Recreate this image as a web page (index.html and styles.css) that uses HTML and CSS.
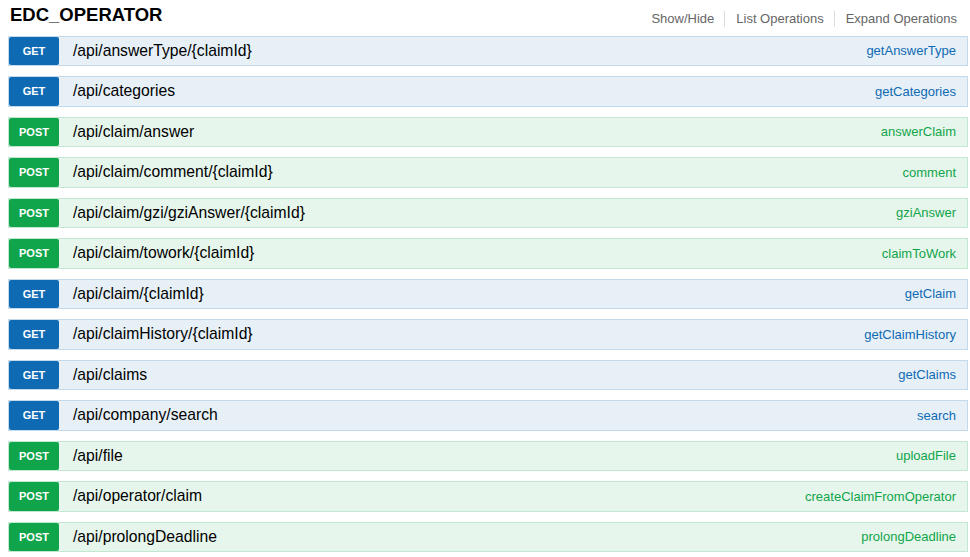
FILE: index.html
```html
<!DOCTYPE html>
<html>
<head>
<meta charset="utf-8">
<link rel="stylesheet" href="styles.css">
</head>
<body>
<div class="resource">
  <div class="res-head">
    <h2 class="res-title">EDC_OPERATOR</h2>
    <ul class="res-links">
      <li>Show/Hide</li>
      <li>List Operations</li>
      <li>Expand Operations</li>
    </ul>
  </div>
  <ul class="ops">
    <li class="op get"><span class="method">GET</span><span class="path">/api/answerType/{claimId}</span><span class="nick">getAnswerType</span></li>
    <li class="op get"><span class="method">GET</span><span class="path">/api/categories</span><span class="nick">getCategories</span></li>
    <li class="op post"><span class="method">POST</span><span class="path">/api/claim/answer</span><span class="nick">answerClaim</span></li>
    <li class="op post"><span class="method">POST</span><span class="path">/api/claim/comment/{claimId}</span><span class="nick">comment</span></li>
    <li class="op post"><span class="method">POST</span><span class="path">/api/claim/gzi/gziAnswer/{claimId}</span><span class="nick">gziAnswer</span></li>
    <li class="op post"><span class="method">POST</span><span class="path">/api/claim/towork/{claimId}</span><span class="nick">claimToWork</span></li>
    <li class="op get"><span class="method">GET</span><span class="path">/api/claim/{claimId}</span><span class="nick">getClaim</span></li>
    <li class="op get"><span class="method">GET</span><span class="path">/api/claimHistory/{claimId}</span><span class="nick">getClaimHistory</span></li>
    <li class="op get"><span class="method">GET</span><span class="path">/api/claims</span><span class="nick">getClaims</span></li>
    <li class="op get"><span class="method">GET</span><span class="path">/api/company/search</span><span class="nick">search</span></li>
    <li class="op post"><span class="method">POST</span><span class="path">/api/file</span><span class="nick">uploadFile</span></li>
    <li class="op post"><span class="method">POST</span><span class="path">/api/operator/claim</span><span class="nick">createClaimFromOperator</span></li>
    <li class="op post"><span class="method">POST</span><span class="path">/api/prolongDeadline</span><span class="nick">prolongDeadline</span></li>
  </ul>
</div>
</body>
</html>
```

FILE: styles.css
```css
html, body {
  margin: 0;
  padding: 0;
  background: #fff;
  font-family: "Liberation Sans", Arial, sans-serif;
}

.resource {
  width: 960px;
  padding-left: 8px;
}

.res-head {
  height: 35.5px;
  display: flex;
  justify-content: space-between;
  align-items: flex-start;
}

.res-title {
  margin: 0;
  padding: 4px 0 0 2px;
  font-size: 18.5px;
  font-weight: bold;
  color: #000;
  line-height: normal;
}

.res-links {
  list-style: none;
  margin: 0;
  padding: 11px 11px 0 0;
  display: flex;
}

.res-links li {
  font-size: 13px;
  color: #666;
  line-height: 16px;
  padding: 0 10px 0 11px;
  border-right: 1px solid #ddd;
}

.res-links li:last-child {
  border-right: none;
  padding-right: 0;
}

.ops {
  list-style: none;
  margin: 0;
  padding: 0;
}

.op {
  height: 28.5px;
  margin-bottom: 10px;
  display: flex;
  align-items: center;
  border: 1px solid;
}

.op.get {
  background: #e7f0f7;
  border-color: #c3d9ec;
}

.op.post {
  background: #e7f6ec;
  border-color: #c3e8d1;
}

.method {
  width: 50px;
  height: 100%;
  display: flex;
  align-items: center;
  justify-content: center;
  color: #fff;
  font-size: 11px;
  font-weight: bold;
  border-radius: 2px;
}

.get .method { background: #0f6ab4; }
.post .method { background: #10a54a; }

.path {
  flex: 1;
  padding-left: 14px;
  font-size: 15.7px;
  color: #000;
}

.nick {
  padding-right: 11px;
  font-size: 13px;
}

.get .nick { color: #0f6ab4; }
.post .nick { color: #10a54a; }
```
